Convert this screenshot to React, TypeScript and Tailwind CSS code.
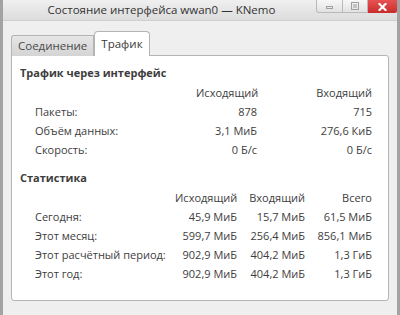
import React from 'react';

const font = { fontFamily: '"Open Sans", "Noto Sans", sans-serif' };

const trafficRows = [
  { label: 'Пакеты:', out: '878', inc: '715' },
  { label: 'Объём данных:', out: '3,1 МиБ', inc: '276,6 КиБ' },
  { label: 'Скорость:', out: '0 Б/с', inc: '0 Б/с' },
];

const statRows = [
  { label: 'Сегодня:', out: '45,9 МиБ', inc: '15,7 МиБ', all: '61,5 МиБ' },
  { label: 'Этот месяц:', out: '599,7 МиБ', inc: '256,4 МиБ', all: '856,1 МиБ' },
  { label: 'Этот расчётный период:', out: '902,9 МиБ', inc: '404,2 МиБ', all: '1,3 ГиБ' },
  { label: 'Этот год:', out: '902,9 МиБ', inc: '404,2 МиБ', all: '1,3 ГиБ' },
];

const App: React.FC = () => {
  return (
    <div
      className="w-[400px] h-[315px] bg-[#efefef] border-x-[3px] border-[#a3a3a3] flex flex-col text-[11px] text-[#3d3d3d] overflow-hidden"
      style={font}
    >
      {/* title bar */}
      <div className="h-[21px] flex bg-gradient-to-b from-[#f0f0f0] to-[#dcdcdc] border-b border-[#cfcfcf]">
        <div className="flex-1 text-center text-[11.5px] leading-[19px] text-[#333] pl-[4px]">
          Состояние интерфейса wwan0 — KNemo
        </div>
        <div className="flex items-start h-[13px]">
          <div className="w-[27px] h-[13px] border border-t-0 border-[#b9b9b9] rounded-bl-[3px] bg-gradient-to-b from-[#f7f7f7] to-[#e2e2e2] flex items-center justify-center">
            <div className="w-[7px] h-[3px] border border-[#a0a0a0] bg-[#e8e8e8] mt-[3px]" />
          </div>
          <div className="w-[25px] h-[13px] border-b border-r border-[#b9b9b9] bg-gradient-to-b from-[#f7f7f7] to-[#e2e2e2] flex items-center justify-center">
            <div className="w-[8px] h-[8px] border border-[#a0a0a0] p-[1px]">
              <div className="w-full h-full bg-[#c4c4c4]" />
            </div>
          </div>
          <div className="w-[29px] h-[13px] bg-gradient-to-b from-[#e65252] to-[#c92a2a] rounded-br-[2px] flex items-center justify-center">
            <svg width="9" height="8" viewBox="0 0 9 8">
              <path d="M1.5 1 L7.5 7 M7.5 1 L1.5 7" stroke="#fff" strokeWidth="2.2" strokeLinecap="square" />
            </svg>
          </div>
        </div>
      </div>

      <div className="flex-1 flex flex-col px-[8px] pt-[10px]">
        {/* tabs */}
        <div className="flex items-end h-[25px] relative z-10 -mb-px">
          <div className="h-[21px] px-[6px] leading-[20px] text-[11.5px] text-[#4a4a4a] border border-b-0 border-[#b4b4b4] rounded-tl-[3px] bg-gradient-to-b from-[#e6e6e6] to-[#d4d4d4]">
            Соединение
          </div>
          <div className="h-[25px] px-[6px] pt-[2px] leading-[20px] text-[11.5px] text-[#3a3a3a] border border-b-0 border-[#b4b4b4] rounded-t-[4px] bg-white">
            Трафик
          </div>
        </div>

        {/* panel */}
        <div className="h-[246px] bg-white border border-[#b4b4b4] rounded-b-[3px] rounded-tr-[3px] pt-[7px] pl-[8px]">
          <div className="font-bold h-[20px] leading-[20px]">Трафик через интерфейс</div>
          <div className="grid grid-cols-[161px_61px_115px] leading-[19px] pl-[15px]">
            <div />
            <div className="text-right">Исходящий</div>
            <div className="text-right">Входящий</div>
            {trafficRows.map((r) => (
              <React.Fragment key={r.label}>
                <div>{r.label}</div>
                <div className="text-right">{r.out}</div>
                <div className="text-right">{r.inc}</div>
              </React.Fragment>
            ))}
          </div>

          <div className="font-bold h-[20px] leading-[20px] mt-[9px]">Статистика</div>
          <div className="grid grid-cols-[140px_62px_68px_67px] leading-[19px] pl-[15px]">
            <div />
            <div className="text-right">Исходящий</div>
            <div className="text-right">Входящий</div>
            <div className="text-right">Всего</div>
            {statRows.map((r) => (
              <React.Fragment key={r.label}>
                <div className="whitespace-nowrap">{r.label}</div>
                <div className="text-right whitespace-nowrap">{r.out}</div>
                <div className="text-right whitespace-nowrap">{r.inc}</div>
                <div className="text-right whitespace-nowrap">{r.all}</div>
              </React.Fragment>
            ))}
          </div>
        </div>
      </div>
    </div>
  );
};

export default App;
